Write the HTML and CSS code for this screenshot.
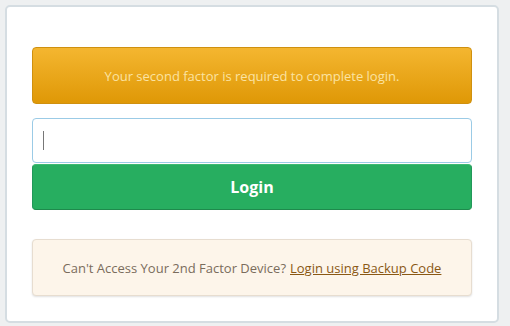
FILE: index.html
```html
<html>
<head>
  <link rel="stylesheet" href="styles.css">
</head>
<body>
  <div class="card">
    <div class="alert-warning">Your second factor is required to complete login.</div>
    <form class="login-form">
      <div class="code-field">
        <input type="text" class="code-input">
        <span class="caret"></span>
      </div>
      <button type="button" class="btn-login">Login</button>
    </form>
    <div class="backup-box">
      Can't Access Your 2nd Factor Device? <a href="#">Login using Backup Code</a>
    </div>
  </div>
</body>
</html>
```

FILE: styles.css
```css
* {
  box-sizing: border-box;
  margin: 0;
  padding: 0;
}

body {
  background-color: #eef0f1;
  font-family: "Open Sans", "Liberation Sans", sans-serif;
  padding: 5px 11px 3px 5px;
}

.card {
  background-color: #ffffff;
  border: 2px solid #d5dde2;
  border-radius: 5px;
  padding: 40px 25px 25px 25px;
  height: 318px;
}

.alert-warning {
  height: 57px;
  display: flex;
  align-items: center;
  justify-content: center;
  font-size: 13px;
  color: #fbe3a2;
  background: linear-gradient(#f4b630, #df9806);
  border: 1px solid #cf900f;
  border-radius: 4px;
}

.login-form {
  margin-top: 14px;
}

.code-field {
  position: relative;
}

.code-input {
  display: block;
  width: 100%;
  height: 45px;
  border: 1px solid #9bcbe6;
  border-radius: 4px;
  background-color: #ffffff;
  outline: none;
}

.caret {
  position: absolute;
  left: 11px;
  top: 13px;
  width: 1px;
  height: 19px;
  background-color: #777777;
}

.btn-login {
  display: block;
  width: 100%;
  height: 46px;
  margin-top: 1px;
  font-family: "Open Sans", "Liberation Sans", sans-serif;
  font-size: 16px;
  font-weight: bold;
  color: #ffffff;
  background-color: #27ae60;
  border: 1px solid #22985a;
  border-top-color: #3dbb71;
  border-bottom-color: #1e8a4c;
  border-radius: 4px;
}

.backup-box {
  margin-top: 29px;
  height: 57px;
  display: flex;
  align-items: center;
  justify-content: center;
  font-size: 13px;
  color: #7a6c5c;
  background-color: #fdf5ea;
  border: 1px solid #e7ddd0;
  border-radius: 4px;
  box-shadow: 0 1px 2px rgba(0, 0, 0, 0.12);
}

.backup-box a {
  color: #8a5814;
  margin-left: 4px;
}
```
